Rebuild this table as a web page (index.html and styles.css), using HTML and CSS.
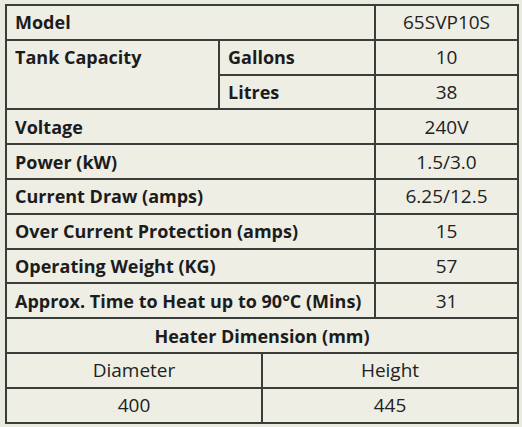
FILE: index.html
```html
<!DOCTYPE html>
<html>
<head>
<meta charset="utf-8">
<link rel="stylesheet" href="styles.css">
</head>
<body>
<table class="spec">
  <colgroup>
    <col class="c1"><col class="c2"><col class="c3"><col class="c4">
  </colgroup>
  <tr><td class="label" colspan="3">Model</td><td class="val">65SVP10S</td></tr>
  <tr><td class="label top" rowspan="2">Tank Capacity</td><td class="label" colspan="2">Gallons</td><td class="val">10</td></tr>
  <tr><td class="label" colspan="2">Litres</td><td class="val">38</td></tr>
  <tr><td class="label" colspan="3">Voltage</td><td class="val">240V</td></tr>
  <tr><td class="label" colspan="3">Power (kW)</td><td class="val">1.5/3.0</td></tr>
  <tr><td class="label" colspan="3">Current Draw (amps)</td><td class="val">6.25/12.5</td></tr>
  <tr><td class="label" colspan="3">Over Current Protection (amps)</td><td class="val">15</td></tr>
  <tr><td class="label" colspan="3">Operating Weight (KG)</td><td class="val">57</td></tr>
  <tr><td class="label" colspan="3">Approx. Time to Heat up to 90°C (Mins)</td><td class="val">31</td></tr>
  <tr><td class="label center" colspan="4">Heater Dimension (mm)</td></tr>
  <tr><td class="val" colspan="2">Diameter</td><td class="val" colspan="2">Height</td></tr>
  <tr><td class="val" colspan="2">400</td><td class="val" colspan="2">445</td></tr>
</table>
</body>
</html>
```

FILE: styles.css
```css
html, body {
  margin: 0;
  padding: 0;
  background: #e9eae0;
}
body {
  padding: 4px 0 0 5px;
  font-family: "Open Sans", "Liberation Sans", sans-serif;
  font-size: 18px;
  line-height: 24px;
  color: #1c1c1c;
}
.spec {
  border-collapse: collapse;
  table-layout: fixed;
  width: 512px;
  background: #eeeee5;
  border: 2px solid #3b3d3a;
}
.c1 { width: 213px; }
.c2 { width: 43px; }
.c3 { width: 113px; }
.c4 { width: 143px; }
.spec td {
  border: 2px solid #3b3d3a;
  height: 32.8px;
  padding: 0 0 0 8px;
  white-space: nowrap;
  vertical-align: middle;
}
.spec td.label {
  font-weight: bold;
}
.spec td.top {
  vertical-align: top;
  padding-top: 4px;
}
.spec td.val {
  text-align: center;
  padding: 0;
  font-size: 19px;
  color: #222222;
}
.spec td.center {
  text-align: center;
  padding: 0;
}
```
